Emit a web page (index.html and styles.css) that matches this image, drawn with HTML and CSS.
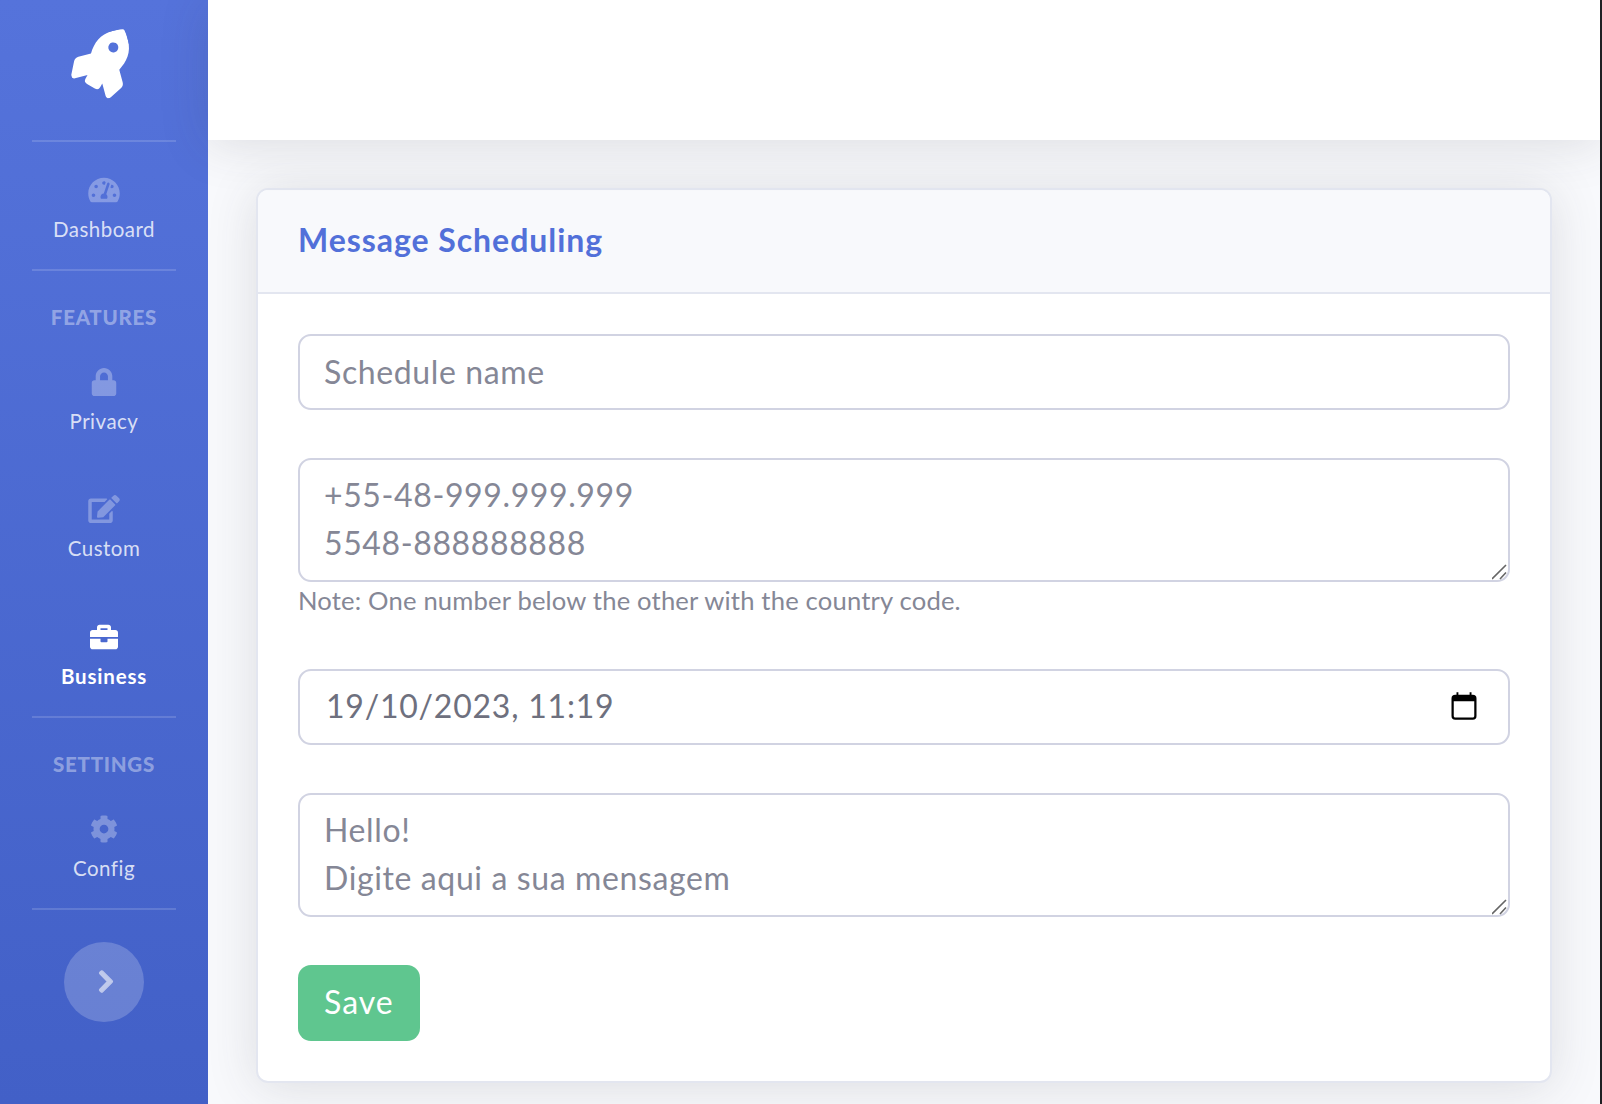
FILE: index.html

```html
<!DOCTYPE html>
<html lang="en">
<head>
    <meta charset="UTF-8">
    <title>Message Scheduling</title>
    <link rel="stylesheet" href="styles.css">
</head>
<body>
    <div class="wrapper">
        <nav class="sidebar">
            <a class="brand" href="#">
                <svg class="brand-icon" viewBox="0 0 512 512"><path fill="currentColor" d="M505.05 19.1a15.89 15.89 0 0 0-12.2-12.2C460.65 0 435.46 0 410.36 0c-103.2 0-165.1 55.2-211.29 128H94.87A48 48 0 0 0 52 154.49l-49.42 98.8A24 24 0 0 0 24.07 288h103.77l-22.47 22.47a32 32 0 0 0 0 45.25l50.9 50.91a32 32 0 0 0 45.26 0L224 384.16V488a24 24 0 0 0 34.7 21.49l98.7-49.39a47.91 47.91 0 0 0 26.5-42.9V312.79c72.59-46.3 128-108.4 128-211.09.1-25.2.1-50.4-6.85-82.6zM384 168a40 40 0 1 1 40-40 40 40 0 0 1-40 40z"/></svg>
            </a>
            <hr class="divider">
            <a class="nav-link" href="#">
                <svg class="nav-icon" viewBox="0 0 576 512"><path fill="currentColor" d="M288 32C128.94 32 0 160.94 0 320c0 52.8 14.25 102.26 39.06 144.8 5.61 9.62 16.3 15.2 27.44 15.2h443c11.14 0 21.83-5.58 27.44-15.2C561.75 422.26 576 372.8 576 320c0-159.06-128.94-288-288-288zm0 64c14.71 0 26.58 10.13 30.32 23.65-1.11 2.26-2.64 4.23-3.45 6.67l-9.22 27.67c-5.13 3.49-10.97 6.01-17.64 6.01-17.67 0-32-14.33-32-32S270.33 96 288 96zM96 384c-17.67 0-32-14.33-32-32s14.33-32 32-32 32 14.33 32 32-14.33 32-32 32zm48-160c-17.67 0-32-14.33-32-32s14.33-32 32-32 32 14.33 32 32-14.33 32-32 32zm246.77-72.41l-61.33 184C343.13 347.33 352 364.54 352 384c0 11.72-3.38 22.55-8.88 32H232.88c-5.5-9.45-8.88-20.28-8.88-32 0-33.94 26.5-61.43 59.9-63.59l61.34-184.01c4.17-12.56 17.73-19.45 30.36-15.17 12.57 4.19 19.35 17.79 15.17 30.36zm14.66 57.2l15.52-46.55c3.47-1.29 7.13-2.23 11.05-2.23 17.67 0 32 14.33 32 32s-14.33 32-32 32c-11.38-.01-20.89-6.28-26.57-15.22zM480 384c-17.67 0-32-14.33-32-32s14.33-32 32-32 32 14.33 32 32-14.33 32-32 32z"/></svg>
                <span>Dashboard</span>
            </a>
            <hr class="divider">
            <div class="nav-heading">Features</div>
            <a class="nav-link" href="#">
                <svg class="nav-icon" viewBox="0 0 448 512"><path fill="currentColor" d="M400 224h-24v-72C376 68.2 307.8 0 224 0S72 68.2 72 152v72H48c-26.5 0-48 21.5-48 48v192c0 26.5 21.5 48 48 48h352c26.5 0 48-21.5 48-48V272c0-26.5-21.5-48-48-48zm-104 0H152v-72c0-39.7 32.3-72 72-72s72 32.3 72 72v72z"/></svg>
                <span>Privacy</span>
            </a>
            <a class="nav-link" href="#">
                <svg class="nav-icon" viewBox="0 0 576 512"><path fill="currentColor" d="M402.6 83.2l90.2 90.2c3.8 3.8 3.8 10 0 13.8L274.4 405.6l-92.8 10.3c-12.4 1.4-22.9-9.1-21.5-21.5l10.3-92.8L388.8 83.2c3.8-3.8 10-3.8 13.8 0zm162-22.9l-48.8-48.8c-15.2-15.2-39.9-15.2-55.2 0l-35.4 35.4c-3.8 3.8-3.8 10 0 13.8l90.2 90.2c3.8 3.8 10 3.8 13.8 0l35.4-35.4c15.2-15.3 15.2-40 0-55.2zM384 346.2V448H64V128h229.8c3.2 0 6.2-1.3 8.5-3.5l40-40c7.6-7.6 2.2-20.5-8.5-20.5H48C21.5 64 0 85.5 0 112v352c0 26.5 21.5 48 48 48h352c26.5 0 48-21.5 48-48V306.2c0-10.7-12.9-16-20.5-8.5l-40 40c-2.2 2.3-3.5 5.3-3.5 8.5z"/></svg>
                <span>Custom</span>
            </a>
            <a class="nav-link active" href="#">
                <svg class="nav-icon" viewBox="0 0 512 512"><path fill="currentColor" d="M320 336c0 8.84-7.16 16-16 16h-96c-8.84 0-16-7.16-16-16v-48H0v144c0 25.6 22.4 48 48 48h416c25.6 0 48-22.4 48-48V288H320v48zm144-208h-80V80c0-25.6-22.4-48-48-48H176c-25.6 0-48 22.4-48 48v48H48c-25.6 0-48 22.4-48 48v80h512v-80c0-25.6-22.4-48-48-48zm-144 0H192V96h128v32z"/></svg>
                <span>Business</span>
            </a>
            <hr class="divider">
            <div class="nav-heading">Settings</div>
            <a class="nav-link" href="#">
                <svg class="nav-icon" viewBox="0 0 512 512"><path fill="currentColor" d="M487.4 315.7l-42.6-24.6c4.3-23.2 4.3-47 0-70.2l42.6-24.6c4.9-2.8 7.1-8.6 5.5-14-11.1-35.6-30-67.8-54.7-94.6-3.8-4.1-10-5.1-14.8-2.3L380.8 110c-17.9-15.4-38.5-27.3-60.8-35.1V25.8c0-5.6-3.9-10.5-9.4-11.7-36.7-8.2-74.3-7.8-109.2 0-5.5 1.2-9.4 6.1-9.4 11.7V75c-22.2 7.9-42.8 19.8-60.8 35.1L88.7 85.5c-4.9-2.8-11-1.9-14.8 2.3-24.7 26.7-43.6 58.9-54.7 94.6-1.7 5.4.6 11.2 5.5 14L67.3 221c-4.3 23.2-4.3 47 0 70.2l-42.6 24.6c-4.9 2.8-7.1 8.6-5.5 14 11.1 35.6 30 67.8 54.7 94.6 3.8 4.1 10 5.1 14.8 2.3l42.6-24.6c17.9 15.4 38.5 27.3 60.8 35.1v49.2c0 5.6 3.9 10.5 9.4 11.7 36.7 8.2 74.3 7.8 109.2 0 5.5-1.2 9.4-6.1 9.4-11.7v-49.2c22.2-7.9 42.8-19.8 60.8-35.1l42.6 24.6c4.9 2.8 11 1.9 14.8-2.3 24.7-26.7 43.6-58.9 54.7-94.6 1.5-5.5-.7-11.3-5.6-14.1zM256 336c-44.1 0-80-35.9-80-80s35.9-80 80-80 80 35.9 80 80-35.9 80-80 80z"/></svg>
                <span>Config</span>
            </a>
            <hr class="divider">
            <button class="sidebar-toggle" type="button" aria-label="Toggle sidebar">
                <svg viewBox="0 0 320 512"><path d="M285.476 272.971L91.132 467.314c-9.373 9.373-24.569 9.373-33.941 0l-22.667-22.667c-9.357-9.357-9.375-24.522-.04-33.901L188.505 256 34.484 101.255c-9.335-9.379-9.317-24.544.04-33.901l22.667-22.667c9.373-9.373 24.569-9.373 33.941 0L285.475 239.03c9.373 9.372 9.373 24.568.001 33.941z"/></svg>
            </button>
        </nav>

        <div class="content-wrapper">
            <header class="topbar"></header>
            <main class="content">
                <section class="card">
                    <div class="card-header">
                        <h6>Message Scheduling</h6>
                    </div>
                    <form class="card-body">
                        <div class="form-group">
                            <input class="form-control" type="text" placeholder="Schedule name">
                        </div>
                        <div class="form-group">
                            <div class="textarea-wrap">
                                <textarea class="form-control" rows="2" placeholder="+55-48-999.999.999&#10;5548-888888888"></textarea>
                                <svg class="grip" viewBox="0 0 16 16"><path d="M0 15L14 1M8 15l6-6.500"/></svg>
                            </div>
                            <small class="note">Note: One number below the other with the country code.</small>
                        </div>
                        <div class="form-group">
                            <div class="form-control date-field">
                                <input type="text" value="19/10/2023, 11:19">
                                <svg class="calendar-icon" viewBox="0 0 24 24"><path fill="currentColor" fill-rule="evenodd" d="M6 1h1.500v2h9V1H18v2h1a3 3 0 0 1 3 3v14a3 3 0 0 1-3 3H5a3 3 0 0 1-3-3V6a3 3 0 0 1 3-3h1V1zM3.800 8.200V20c0 .7.5 1.200 1.200 1.200h14c.7 0 1.200-.5 1.200-1.200V8.200H3.800z"/></svg>
                            </div>
                        </div>
                        <div class="form-group">
                            <div class="textarea-wrap">
                                <textarea class="form-control" rows="2" placeholder="Hello!&#10;Digite aqui a sua mensagem"></textarea>
                                <svg class="grip" viewBox="0 0 16 16"><path d="M0 15L14 1M8 15l6-6.500"/></svg>
                            </div>
                        </div>
                        <button class="btn-save" type="button">Save</button>
                    </form>
                </section>
            </main>
        </div>
    </div>
</body>
</html>
```

FILE: styles.css

```css
* {
    box-sizing: border-box;
}

html, body {
    height: 100%;
}

body {
    margin: 0;
    font-family: "Lato", "Open Sans", sans-serif;
    background-color: #f8f9fc;
    color: #858796;
    overflow: hidden;
}

.wrapper {
    display: flex;
    height: 100%;
}

/* sidebar */
.sidebar {
    width: 208px;
    flex-shrink: 0;
    display: flex;
    flex-direction: column;
    align-items: center;
    background-image: linear-gradient(180deg, #5573db 0%, #4260c7 100%);
    color: #fff;
}

.brand {
    height: 140px;
    width: 100%;
    display: flex;
    align-items: center;
    justify-content: center;
    color: #fff;
}

.brand-icon {
    width: 64px;
    height: 64px;
    margin: 0 4px 6px 0;
    transform: rotate(-15deg);
}

.divider {
    width: 144px;
    height: 2px;
    margin: 0;
    border: 0;
    flex-shrink: 0;
    background-color: rgba(255, 255, 255, 0.15);
}

.nav-link {
    height: 127.2px;
    width: 100%;
    padding-top: 34px;
    display: flex;
    flex-direction: column;
    align-items: center;
    color: rgba(255, 255, 255, 0.8);
    font-size: 20.5px;
    line-height: 24px;
    letter-spacing: 0.5px;
    text-decoration: none;
}

.nav-icon {
    height: 28px;
    width: 36px;
    color: rgba(255, 255, 255, 0.3);
    margin-bottom: 13px;
}

.nav-link.active {
    color: #fff;
    font-weight: 700;
    letter-spacing: 0.8px;
}

.nav-link.active .nav-icon {
    color: #fff;
}

.nav-heading {
    margin-top: 34px;
    margin-bottom: 5px;
    color: rgba(255, 255, 255, 0.4);
    font-size: 20.5px;
    line-height: 24px;
    font-weight: 900;
    letter-spacing: 0.75px;
    text-transform: uppercase;
}

.sidebar-toggle {
    width: 80px;
    height: 80px;
    margin-top: 32px;
    padding: 0;
    border: 0;
    border-radius: 50%;
    background-color: rgba(255, 255, 255, 0.2);
    display: flex;
    align-items: center;
    justify-content: center;
}

.sidebar-toggle svg {
    width: 16px;
    height: 25px;
    margin-left: 4px;
    fill: #c0caec;
    stroke: #c0caec;
    stroke-width: 24;
}

/* main area */
.content-wrapper {
    flex: 1;
    display: flex;
    flex-direction: column;
    min-width: 0;
    border-right: 2px solid #1f2023;
}

.topbar {
    height: 140px;
    flex-shrink: 0;
    background-color: #fff;
    box-shadow: 0 4px 50px rgba(58, 59, 69, 0.15);
    position: relative;
}

.content {
    padding: 48px 48px 0;
}

.card {
    background-color: #fff;
    border: 2px solid #e3e6f0;
    border-radius: 12px;
    box-shadow: 0 4px 50px rgba(58, 59, 69, 0.15);
    overflow: hidden;
}

.card-header {
    height: 104px;
    padding: 0 40px 4px;
    display: flex;
    align-items: center;
    background-color: #f8f9fc;
    border-bottom: 2px solid #e3e6f0;
}

.card-header h6 {
    margin: 0;
    color: #5270d9;
    font-size: 32px;
    font-weight: 700;
    letter-spacing: 0.95px;
}

.card-body {
    padding: 40px;
}

.form-group {
    margin-bottom: 48px;
}

.form-control {
    display: block;
    width: 100%;
    height: 76px;
    padding: 0 24px 2px;
    border: 2px solid #d1d3e2;
    border-radius: 13px;
    background-color: #fff;
    font-family: inherit;
    font-size: 32px;
    letter-spacing: 0.62px;
    color: #6e707e;
    outline: none;
}

.textarea-wrap {
    position: relative;
}

textarea.form-control {
    height: 124px;
    padding: 11px 24px;
    line-height: 48px;
    resize: none;
}

.grip {
    position: absolute;
    right: 2px;
    bottom: 2px;
    width: 16px;
    height: 16px;
    fill: none;
    stroke: #666;
    stroke-width: 1.6;
    pointer-events: none;
}

.form-control::placeholder {
    color: #858796;
    opacity: 1;
}

.note {
    display: block;
    padding-bottom: 3px;
    font-size: 25.6px;
    line-height: 36px;
    letter-spacing: 0.18px;
}

.date-field {
    display: flex;
    align-items: center;
    justify-content: space-between;
    padding-right: 29px;
}

.date-field input {
    flex: 1;
    min-width: 0;
    margin: 0 0 2px 2px;
    padding: 0;
    border: 0;
    outline: none;
    font: inherit;
    letter-spacing: 0.78px;
    color: #6e707e;
}

.calendar-icon {
    width: 30px;
    height: 30px;
    color: #000;
}

.btn-save {
    display: block;
    height: 76px;
    padding: 0 26px 4px;
    border: 0;
    border-radius: 13px;
    background-color: #5fc68f;
    color: #fff;
    font-family: inherit;
    font-size: 32px;
    letter-spacing: 1px;
}
```
